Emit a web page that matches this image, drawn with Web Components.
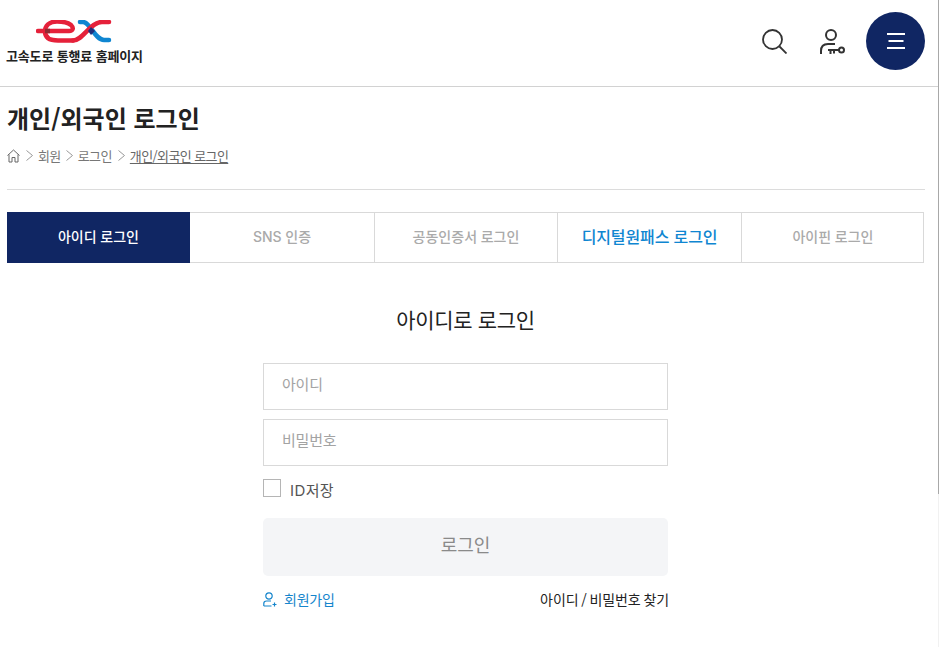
<!DOCTYPE html>
<html lang="ko">
<head>
<meta charset="utf-8">
<title>개인/외국인 로그인</title>
<style>
  html, body { margin: 0; padding: 0; background: #fff; }
  body {
    font-family: "Noto Sans CJK KR", "Noto Sans", sans-serif;
    color: #222;
    height: 647px;
    overflow: hidden;
  }
</style>
</head>
<body>
<site-header></site-header>
<page-title heading="개인/외국인 로그인"></page-title>
<login-tabs></login-tabs>
<login-form></login-form>
<scroll-rail></scroll-rail>

<script>
class SiteHeader extends HTMLElement {
  constructor() {
    super();
    this.attachShadow({ mode: 'open' });
  }

  connectedCallback() {
    this.shadowRoot.innerHTML = `
      <style>
        :host {
          display: flex;
          justify-content: space-between;
          align-items: center;
          height: 83px;
          border-bottom: 1px solid #d2d2d2;
          padding: 0 14px 3px 6px;
        }
        .brand { display: flex; flex-direction: column; align-items: flex-start; margin-top: 2px; }
        .brand svg { display: block; margin-left: 30px; }
        .brand span {
          font-size: 13px;
          font-weight: 700;
          letter-spacing: -0.15px;
          line-height: 18px;
          color: #222;
          margin-top: 4px;
        }
        .actions { display: flex; align-items: center; }
        .actions svg { display: block; }
        .search { margin-right: 33px; }
        .key { margin-right: 21px; }
        .menu {
          width: 59px; height: 58px; border-radius: 50%;
          margin-top: -1px;
          background: #102663;
          display: flex; align-items: center; justify-content: center;
        }
      </style>
      <div class="brand">
        <svg width="76" height="23" viewBox="0 0 76 23" fill="none">
          <path d="M2 11H33C37 11 38 8 35 5C32 2.500 26 1.500 21 1.500C13 1.500 9 6 9 11.500C9 18 14 20.500 22 20.500H37" stroke="#e5213a" stroke-width="4.500" stroke-linecap="round"/>
          <path d="M44 2H47C54 2 59 20 68 20H73" stroke="#0f86d1" stroke-width="4.500" stroke-linecap="round"/>
          <path d="M37 20.500C47 20.500 54 2 66 2H73" stroke="#e5213a" stroke-width="4.500" stroke-linecap="round"/>
          <rect x="9" y="8.750" width="5" height="4.500" fill="#8f2b33"/>
          <path d="M52 11L55 7L59 11L55 15Z" fill="#1f2f7c"/>
        </svg>
        <span>고속도로 통행료 홈페이지</span>
      </div>
      <div class="actions">
        <svg class="search" width="25" height="25" viewBox="0 0 25 25" fill="none" stroke="#333" stroke-width="1.800">
          <circle cx="10.500" cy="10.500" r="9.500"/>
          <path d="M17.500 17.500L24.500 24.500"/>
        </svg>
        <svg class="key" width="25" height="25" viewBox="0 0 25 25" fill="none" stroke="#333" stroke-width="2">
          <circle cx="11" cy="6" r="5"/>
          <path d="M1 25V22C1 17 4 15 8 15H15"/>
          <path d="M8 21H19.500M10.500 21V25M14 21V24.500"/>
          <circle cx="21.500" cy="21" r="2.500"/>
        </svg>
        <div class="menu">
          <svg width="20" height="18" viewBox="0 0 20 18" fill="none" stroke="#fff" stroke-width="2">
            <path d="M1 2H19M2.500 9H17.500M1 16H19"/>
          </svg>
        </div>
      </div>
    `;
  }
}

class PageTitle extends HTMLElement {
  constructor() {
    super();
    this.attachShadow({ mode: 'open' });
  }

  connectedCallback() {
    const heading = this.getAttribute('heading');
    const chevron = `<svg width="9" height="11" viewBox="0 0 9 11" fill="none" stroke="#999" stroke-width="1"><path d="M1.500 .5L7.500 5.500L1.500 10.500"/></svg>`;
    this.shadowRoot.innerHTML = `
      <style>
        :host {
          display: block;
          margin: 0 14px 0 7px;
          height: 102px;
          border-bottom: 1px solid #dcdcdc;
        }
        h1 {
          margin: 0;
          padding-top: 13px;
          font-size: 24px;
          line-height: 35px;
          font-weight: 700;
          letter-spacing: 0;
          color: #222;
        }
        nav {
          display: flex;
          align-items: center;
          gap: 4px;
          margin-top: 11px;
          font-size: 13px;
          line-height: 19px;
          letter-spacing: -0.6px;
          color: #777;
        }
        nav svg { display: block; flex: none; }
        nav .home { margin-right: 1px; }
        nav .mid { margin-right: 1px; }
        nav a { color: #666; text-decoration: underline; text-underline-offset: 2px; }
      </style>
      <h1>${heading}</h1>
      <nav>
        <svg class="home" width="13" height="14" viewBox="0 0 13 14" fill="none" stroke="#666" stroke-width="1"><path d="M.5 6.500L6.500 1L12.500 6.500M2 5.500V13H5V8.500H8V13H11V5.500"/></svg>
        ${chevron}<span>회원</span>
        ${chevron}<span class="mid">로그인</span>
        ${chevron}<a>${heading}</a>
      </nav>
    `;
  }
}

class LoginTabs extends HTMLElement {
  constructor() {
    super();
    this.attachShadow({ mode: 'open' });
  }

  connectedCallback() {
    this.shadowRoot.innerHTML = `
      <style>
        :host {
          display: grid;
          grid-template-columns: 183px 184px 183px 184px 183px;
          margin: 22px 15px 0 7px;
          height: 51px;
          box-sizing: border-box;
          border: 1px solid #d9d9d9;
          border-left: 0;
          font-family: Inter, "Noto Sans CJK KR", sans-serif;
        }
        div {
          display: flex; align-items: center; justify-content: center;
          padding-bottom: 4px;
          font-size: 14px;
          font-weight: 500;
          color: #aaa;
          border-left: 1px solid #d9d9d9;
        }
        .on {
          background: #102663;
          color: #fff;
          border-left: 0;
          margin: -1px 0;
        }
        .pass { color: #0f86d1; font-size: 16px; letter-spacing: -0.1px; }
      </style>
      <div class="on">아이디 로그인</div>
      <div style="border-left:0">SNS 인증</div>
      <div>공동인증서 로그인</div>
      <div class="pass">디지털원패스 로그인</div>
      <div>아이핀 로그인</div>
    `;
  }
}

class LoginForm extends HTMLElement {
  constructor() {
    super();
    this.attachShadow({ mode: 'open' });
  }

  connectedCallback() {
    this.shadowRoot.innerHTML = `
      <style>
        :host {
          display: block;
          width: 405px;
          margin: 40px 0 0 263px;
        }
        h2 {
          margin: 0 0 28px;
          text-align: center;
          font-size: 21px;
          line-height: 32px;
          font-weight: 400;
          letter-spacing: -0.3px;
          color: #222;
        }
        .field {
          height: 47px;
          box-sizing: border-box;
          border: 1px solid #d9d9d9;
          margin-bottom: 9px;
          padding: 0 18px 6px;
          display: flex;
          align-items: center;
          font-size: 15px;
          letter-spacing: -0.2px;
          color: #a3a3a3;
        }
        .save {
          display: flex; align-items: center; gap: 9px;
          height: 32px;
          margin-top: -3px;
          font-family: Inter, "Noto Sans CJK KR", sans-serif;
          font-size: 15px;
          letter-spacing: 0.4px;
          color: #555;
        }
        .box { width: 18px; height: 18px; box-sizing: border-box; border: 1px solid #b5b5b5; }
        .save span:last-child { position: relative; top: 1px; }
        .submit {
          height: 58px;
          margin-top: 14px;
          padding-bottom: 7px;
          box-sizing: border-box;
          border-radius: 5px;
          background: #f4f5f7;
          display: flex; align-items: center; justify-content: center;
          font-size: 18px;
          color: #8a8a8a;
        }
        .links {
          display: flex; justify-content: space-between; align-items: center;
          margin-top: 13px;
          margin-right: -1px;
          font-size: 14px;
          line-height: 20px;
          letter-spacing: -0.1px;
          word-spacing: -1px;
          color: #222;
        }
        .join { display: flex; align-items: center; gap: 7px; color: #1585cc; letter-spacing: -0.2px; }
        .join svg { display: block; }
      </style>
      <h2>아이디로 로그인</h2>
      <div class="field">아이디</div>
      <div class="field">비밀번호</div>
      <div class="save"><span class="box"></span><span>ID저장</span></div>
      <div class="submit">로그인</div>
      <div class="links">
        <span class="join">
          <svg width="14" height="15" viewBox="0 0 14 15" fill="none" stroke="#1585cc" stroke-width="1.200">
            <circle cx="6" cy="4" r="3.200"/>
            <path d="M.8 14V11.500C.8 10 2 9 3.500 9H8M.8 14H8.500M9.500 12.500H13.500M11.500 10.500V14.500"/>
          </svg>
          회원가입
        </span>
        <span>아이디 / 비밀번호 찾기</span>
      </div>
    `;
  }
}

// thin page scrollbar on the right edge, lies over the page
class ScrollRail extends HTMLElement {
  constructor() {
    super();
    this.attachShadow({ mode: 'open' });
  }

  connectedCallback() {
    this.shadowRoot.innerHTML = `
      <style>
        :host {
          display: block;
          position: fixed;
          top: 0;
          right: 0;
          width: 1px;
          height: 647px;
          background: #f1f1f1;
        }
        div { height: 494px; background: #a8a8a8; }
      </style>
      <div></div>
    `;
  }
}

customElements.define('site-header', SiteHeader);
customElements.define('page-title', PageTitle);
customElements.define('login-tabs', LoginTabs);
customElements.define('login-form', LoginForm);
customElements.define('scroll-rail', ScrollRail);
</script>
</body>
</html>
